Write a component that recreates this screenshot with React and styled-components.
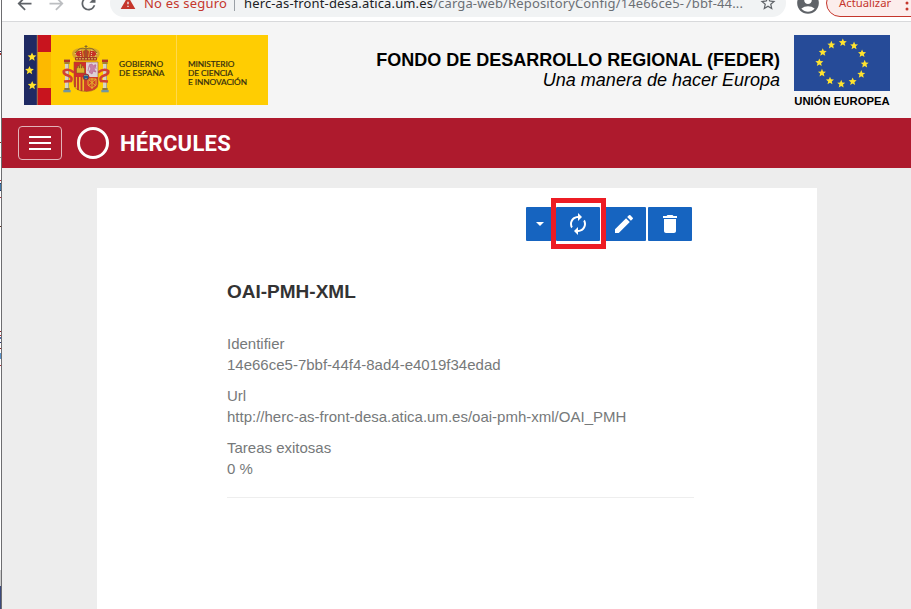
import React from "react";
import styled, { createGlobalStyle } from "styled-components";
import {
  MdArrowBack, MdArrowForward, MdRefresh, MdWarning, MdStarBorder,
  MdAccountCircle, MdAutorenew, MdEdit, MdDelete,
} from "react-icons/md";

const GlobalStyle = createGlobalStyle`
  *, *::before, *::after { box-sizing: border-box; }
  body { margin: 0; overflow: hidden; background: #ededed; font-family: "Liberation Sans", Arial, sans-serif; }
  svg { display: block; flex: none; }
`;

const Screen = styled.div`
  display: flex;
  height: 609px;
  overflow: hidden;
`;

const mark = (y, h, c) => `linear-gradient(${c}, ${c}) 0 ${y}px / 1px ${h}px no-repeat`;
const edgeMarks = [
  mark(51, 1, "#1d1f5c"), mark(53, 2, "#a33"), mark(142, 1, "#8b2525"), mark(157, 1, "#a88"),
  mark(180, 1, "#b0303c"), mark(183, 1, "#203c6c"), mark(184, 6, "#4079aa"), mark(190, 1, "#203c6c"),
  mark(197, 1, "#b0303c"), mark(226, 1, "#5a3020"), mark(331, 1, "#8b2525"), mark(335, 1, "#b0303c"),
  mark(337, 2, "#4b6ca8"), mark(342, 1, "#2d3b70"), mark(348, 1, "#8b2525"), mark(353, 6, "#5b93c9"),
  mark(365, 1, "#b0303c"), mark(570, 16, "#ccc"), mark(586, 23, "#3b4a7c"),
].join(", ");

const WindowEdge = styled.div`
  flex: none;
  width: 2px;
  border-right: 1px solid #6d6d70;
  background: ${edgeMarks}, #fff;
`;

const Browser = styled.div`
  flex: 1;
  min-width: 0;
  display: flex;
  flex-direction: column;
`;

const ChromeBar = styled.div`
  flex: none;
  height: 22px;
  overflow: hidden;
  background: #fff;
  border-bottom: 1px solid #d8d9db;
`;

const ChromeRow = styled.div`
  display: flex;
  align-items: center;
  height: 28px;
  margin-top: -11px;
  padding-left: 12px;
  color: #5f6368;
  font: 14px/20px "Noto Sans", "Open Sans", sans-serif;
  white-space: nowrap;
`;

const NavIcon = styled.span`
  flex: none;
  width: 32px;
  color: ${(p) => (p.$muted ? "#bcbec1" : "#5f6368")};
`;

const AddressBar = styled.div`
  display: flex;
  align-items: center;
  flex: none;
  width: 676px;
  height: 28px;
  padding: 0 9px 0 10px;
  border-radius: 14px;
  background: #f1f3f4;
`;

const Warning = styled.span`
  display: flex;
  align-items: center;
  gap: 8px;
  width: 114px;
  color: #c5362c;
  font-size: 13px;
  letter-spacing: 0.2px;
`;

const Separator = styled.span`
  width: 1px;
  height: 16px;
  margin-right: 9px;
  background: #9aa0a6;
`;

const Address = styled.span`
  flex: 1;
  font-size: 13px;
  letter-spacing: 0.14px;
  color: #6b6f74;
`;

const Host = styled.span`
  color: #202124;
`;

const Avatar = styled.span`
  flex: none;
  margin: 0 5px 0 9px;
`;

const UpdateButton = styled.div`
  display: flex;
  align-items: center;
  flex: none;
  width: 110px;
  height: 28px;
  padding-left: 12px;
  border: 1px solid #c5362c;
  border-radius: 14px;
  background: #fcedec;
  color: #c5362c;
  font-size: 11.3px;
`;

const Dots = styled.svg`
  margin-left: 14px;
`;

const FundingHeader = styled.header`
  flex: none;
  display: flex;
  height: 96px;
  padding: 13px 21px 0 22px;
  background: #f5f5f5;
`;

const Ministry = styled.div`
  display: flex;
  width: 244px;
  height: 70px;
  background: #ffcd02;
  font: 8.3px/9px Lato, sans-serif;
  color: #332d10;
`;

const MinistryPart = styled.div`
  width: ${(p) => p.$w}px;
  padding: ${(p) => p.$pad};
  border-right: ${(p) => (p.$rule ? "1px solid #ffd84d" : "0")};
  white-space: nowrap;
  -webkit-text-stroke: 0.2px #332d10;
  letter-spacing: ${(p) => p.$ls};
`;

const MinistryLine = styled.div`
  height: 9px;
`;

const FundText = styled.div`
  margin-left: auto;
  padding-top: 15px;
  color: #000;
  text-align: right;
  line-height: 20px;
  white-space: nowrap;
`;

const FundTitle = styled.div`
  font-size: 18px;
  font-weight: 700;
`;

const FundMotto = styled.div`
  font-size: 18px;
  font-style: italic;
`;

const Union = styled.div`
  width: 96px;
  margin-left: 14px;
  font-size: 11.3px;
  font-weight: 700;
  line-height: 20px;
  text-align: center;
  white-space: nowrap;
`;

const NavBar = styled.nav`
  flex: none;
  display: flex;
  align-items: center;
  height: 50px;
  padding-left: 16px;
  background: #ae1a2d;
  color: #fff;
`;

const MenuButton = styled.div`
  display: flex;
  flex-direction: column;
  align-items: center;
  justify-content: center;
  gap: 4px;
  width: 44px;
  height: 34px;
  border: 1px solid #e3b3b9;
  border-radius: 4px;
`;

const MenuLine = styled.span`
  width: 22px;
  height: 2px;
  background: #fff;
`;

const BrandRing = styled.span`
  width: 32px;
  height: 32px;
  margin: 0 11px 0 15px;
  border: 3px solid #fff;
  border-radius: 50%;
`;

const Brand = styled.span`
  padding-top: 2px;
  font: 700 22px/30px Roboto, sans-serif;
  letter-spacing: 0.3px;
`;

const Main = styled.main`
  flex: 1;
  display: flex;
  padding: 20px 94px 0 95px;
  background: #ededed;
`;

const Card = styled.section`
  flex: 1;
  padding: 19px 123px 0 130px;
  background: #fff;
  color: #76797a;
`;

const Toolbar = styled.div`
  display: flex;
  justify-content: flex-end;
  gap: 2px;
  padding-right: 2px;
`;

const ToolButton = styled.div`
  position: relative;
  display: flex;
  align-items: center;
  justify-content: center;
  width: ${(p) => p.$w || 44}px;
  height: 34px;
  border-radius: 1px;
  background: #1664c0;
  color: #fff;
`;

const Highlight = styled.span`
  position: absolute;
  z-index: 1;
  inset: -9px -6px -8px -5px;
  border: 5px solid #ed1c24;
`;

const Title = styled.h1`
  margin: 39px 0 29px;
  font-size: 19px;
  line-height: 24px;
  color: #333;
  font-weight: 700;
`;

const Details = styled.dl`
  display: flex;
  flex-direction: column;
  gap: 10px;
  margin: 0;
  padding-bottom: 18px;
  border-bottom: 1px solid #eee;
  font-size: 15px;
  line-height: 21px;
`;

const Term = styled.dt``;
const Value = styled.dd`
  margin: 0;
`;

const starPoints = (cx, cy, r) =>
  Array.from({ length: 10 }, (_, i) => {
    const a = (Math.PI / 5) * i - Math.PI / 2;
    const k = i % 2 ? r * 0.45 : r;
    return `${(cx + k * Math.cos(a)).toFixed(2)},${(cy + k * Math.sin(a)).toFixed(2)}`;
  }).join(" ");

const Star = ({ x, y, r }) => <polygon points={starPoints(x, y, r)} fill="#ffe32e" />;

const Flags = () => (
  <svg width="27" height="70">
    <rect width="13" height="70" fill="#1f2a63" />
    <rect x="13" width="14" height="70" fill="#fdb900" />
    <rect x="13.5" width="13.5" height="17" fill="#c8141e" />
    <rect x="13.5" y="53" width="13.5" height="17" fill="#c8141e" />
    <rect x="12.7" width="0.8" height="70" fill="#7b6270" />
    <Star x={8} y={22} r={4.6} />
    <Star x={5.5} y={35.5} r={4.6} />
    <Star x={8.2} y={50.5} r={4.6} />
  </svg>
);

const Pillar = ({ x }) => (
  <g>
    <path d={`M${x} 17.5q3-3 6 0v-2h-6z`} fill="#a3593a" />
    <rect x={x} y="16" width="6" height="2" fill="#b53626" />
    <rect x={x + 0.3} y="18" width="5.4" height="2" fill="#a6832e" />
    <rect x={x + 1} y="20" width="4" height="25" fill="#d8d5c0" />
    <rect x={x + 4} y="20" width="1" height="25" fill="#aaa58e" />
    <rect x={x + 0.3} y="44" width="5.4" height="2" fill="#8d793e" />
    <rect x={x - 0.7} y="46" width="7.4" height="2.3" fill="#7296a4" />
  </g>
);

const CoatOfArms = () => (
  <svg width="48" height="50" viewBox="0 0 48 50">
    <Pillar x={2} />
    <Pillar x={40} />
    <g fill="none" stroke="#d24132" strokeWidth="2.6">
      <path d="M12 28.5Q6 24 1.8 27Q1 30 6 31.5Q11 33 9 37L2 37.5" />
      <path d="M36 28.5Q42 24 46.2 27Q47 30 42 31.5Q37 33 39 37L46 37.5" />
    </g>
    <path d="M13 15C5 7 16 2 24 5C32 2 43 7 35 15Z" fill="#d7a528" />
    <path d="M14 12C12 8 17 6 20 7L21 13ZM34 12C36 8 31 6 28 7L27 13Z" fill="#c53127" />
    <path d="M21 7.5Q24 4 27 7.5L26 13h-4z" fill="#bb3f25" />
    <path d="M24 1v13M22.5 2.5h3M13 9Q18 2 24 5Q30 2 35 9" stroke="#86672b" fill="none" strokeWidth="1" />
    <path d="M13 9l2 4M18 6l1 8M35 9l-2 4M30 6l-1 8" stroke="#ede0a0" fill="none" strokeWidth="1" strokeDasharray="1 1" />
    <rect x="13" y="13" width="22" height="3.5" rx="1" fill="#a53b25" />
    <path d="M14 14.8h20" stroke="#e4cb63" strokeDasharray="2 1" />
    <path d="M12 18h12v15H12z" fill="#d12f2b" />
    <path d="M24 18h12v15H24z" fill="#ddd0d5" />
    <path d="M12 33h12v14.5Q12 47 12 40z" fill="#edbd25" />
    <path d="M24 33h12v7Q36 47 24 47.5z" fill="#d43c28" />
    <path d="M13 33v10M16 33v13M19.5 33v14M23 33v14" stroke="#c73529" strokeWidth="1.8" />
    <path d="M14.5 29v-5h1v-2h1.5v2h.7v-4h1.6v4h.7v-2h1.5v2h1v5z" fill="#deb32b" stroke="#765720" strokeWidth=".5" />
    <path d="M27 21l3-1 1 2 3-1-2 4 2 3-3-1-1 3-3-2 2-3zM27 22l-1 5M33 20l1 5" fill="#c782a4" stroke="#bc6e99" strokeWidth=".8" />
    <path d="M26 35h8v6l-4 3-4-3zM26 35l8 7M34 35l-8 7M30 34v11" fill="none" stroke="#e2b32c" />
    <circle cx="24" cy="33" r="3" fill="#235b91" stroke="#a63235" />
    <path d="M23 31v1M25 31v1M24 34v1" stroke="#dec94d" />
    <path d="M12 18h24v22Q36 47 24 47.5Q12 47 12 40z" fill="none" stroke="#9b542d" strokeWidth=".6" />
  </svg>
);

const EuropeFlag = () => (
  <svg width="96" height="56">
    <rect width="96" height="56" fill="#264b98" />
    {Array.from({ length: 12 }, (_, i) => {
      const a = (Math.PI / 6) * i + 0.035 - Math.PI / 2;
      return <Star key={i} x={48 + 22.7 * Math.cos(a)} y={28.3 + 20.7 * Math.sin(a)} r={4.2} />;
    })}
  </svg>
);

const details = [
  ["Identifier", "14e66ce5-7bbf-44f4-8ad4-e4019f34edad"],
  ["Url", "http://herc-as-front-desa.atica.um.es/oai-pmh-xml/OAI_PMH"],
  ["Tareas exitosas", "0 %"],
];

export default function App() {
  return (
    <Screen>
      <GlobalStyle />
      <WindowEdge />
      <Browser>
        <ChromeBar>
          <ChromeRow>
            <NavIcon><MdArrowBack size={21} /></NavIcon>
            <NavIcon $muted><MdArrowForward size={21} /></NavIcon>
            <NavIcon><MdRefresh size={21} /></NavIcon>
            <AddressBar>
              <Warning><MdWarning size={16} />No es seguro</Warning>
              <Separator />
              <Address><Host>herc-as-front-desa.atica.um.es</Host>/carga-web/RepositoryConfig/14e66ce5-7bbf-44...</Address>
              <MdStarBorder size={18} />
            </AddressBar>
            <Avatar><MdAccountCircle size={26} /></Avatar>
            <UpdateButton>
              Actualizar
              <Dots width="4" height="18" fill="#c5362c">
                <circle cx="2" cy="3" r="1.5" /><circle cx="2" cy="9" r="1.5" /><circle cx="2" cy="15" r="1.5" />
              </Dots>
            </UpdateButton>
          </ChromeRow>
        </ChromeBar>
        <FundingHeader>
          <Ministry>
            <Flags />
            <MinistryPart $w={67} $pad="9px 0 0 11px"><CoatOfArms /></MinistryPart>
            <MinistryPart $w={59} $pad="25px 0 0 1px" $rule $ls="0.1px">
              <MinistryLine>GOBIERNO</MinistryLine>
              <MinistryLine>DE ESPAÑA</MinistryLine>
            </MinistryPart>
            <MinistryPart $w={91} $pad="25px 0 0 11px" $ls="-0.08px">
              <MinistryLine>MINISTERIO</MinistryLine>
              <MinistryLine>DE CIENCIA</MinistryLine>
              <MinistryLine>E INNOVACIÓN</MinistryLine>
            </MinistryPart>
          </Ministry>
          <FundText>
            <FundTitle>FONDO DE DESARROLLO REGIONAL (FEDER)</FundTitle>
            <FundMotto>Una manera de hacer Europa</FundMotto>
          </FundText>
          <Union><EuropeFlag />UNIÓN EUROPEA</Union>
        </FundingHeader>
        <NavBar>
          <MenuButton><MenuLine /><MenuLine /><MenuLine /></MenuButton>
          <BrandRing />
          <Brand>HÉRCULES</Brand>
        </NavBar>
        <Main>
          <Card>
            <Toolbar>
              <ToolButton $w={28}>
                <svg width="8" height="4" fill="currentColor"><path d="M0 0h8L4 4z" /></svg>
              </ToolButton>
              <ToolButton><MdAutorenew size={24} /><Highlight /></ToolButton>
              <ToolButton><MdEdit size={24} /></ToolButton>
              <ToolButton><MdDelete size={24} /></ToolButton>
            </Toolbar>
            <Title>OAI-PMH-XML</Title>
            <Details>
              {details.map(([term, value]) => (
                <div key={term}><Term>{term}</Term><Value>{value}</Value></div>
              ))}
            </Details>
          </Card>
        </Main>
      </Browser>
    </Screen>
  );
}
